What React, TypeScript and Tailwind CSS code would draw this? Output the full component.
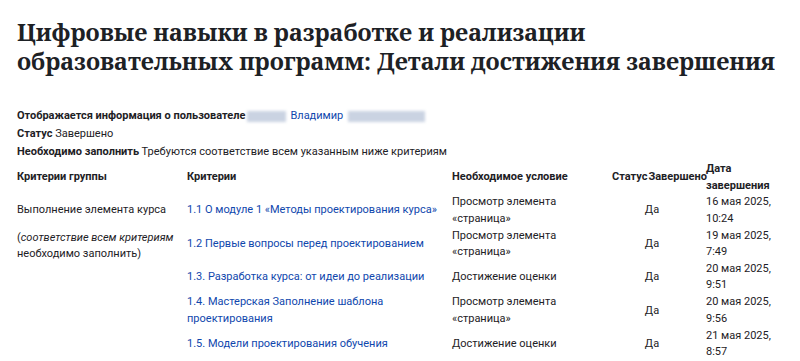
import React from "react";

const rows = [
  { c: "1.1 О модуле 1 «Методы проектирования курса»", cond: ["Просмотр элемента", "«страница»"], d: ["16 мая 2025,", "10:24"] },
  { c: "1.2 Первые вопросы перед проектированием", cond: ["Просмотр элемента", "«страница»"], d: ["19 мая 2025,", "7:49"] },
  { c: "1.3. Разработка курса: от идеи до реализации", cond: ["Достижение оценки"], d: ["20 мая 2025,", "9:51"] },
  { c: "1.4. Мастерская Заполнение шаблона проектирования", cond: ["Просмотр элемента", "«страница»"], d: ["20 мая 2025,", "9:56"] },
  { c: "1.5. Модели проектирования обучения", cond: ["Достижение оценки"], d: ["21 мая 2025,", "8:57"] },
];

function Blur({ w }: { w: number }) {
  return (
    <span className="inline-block align-middle h-[11px] bg-[#cad3e2] blur-[1.5px]" style={{ width: w }} />
  );
}

export default function App() {
  return (
    <div className="w-[800px] h-[361px] overflow-hidden bg-white text-[#1d2125] pl-[17px]" style={{ fontFamily: 'Roboto, sans-serif' }}>
      <h1
        className="pt-[18px] text-[23.3px] leading-[29px] font-bold text-[#1d2125] whitespace-nowrap"
        style={{ fontFamily: '"Noto Serif", serif' }}
      >
        Цифровые навыки в разработке и реализации
        <br />
        образовательных программ: Детали достижения завершения
      </h1>
      <div className="mt-[31px] text-[11px] leading-[18px]">
        <div className="flex items-center h-[18px]">
          <span className="font-bold">Отображается информация о пользователе</span>
          <span className="ml-[2px] flex"><Blur w={39} /></span>
          <span className="ml-[4px] text-[#0f47ad]">Владимир</span>
          <span className="ml-[5px] flex"><Blur w={77} /></span>
        </div>
        <div><span className="font-bold">Статус</span> Завершено</div>
        <div><span className="font-bold">Необходимо заполнить</span> Требуются соответствие всем указанным ниже критериям</div>
      </div>
      <div className="text-[11px] leading-[16.5px]">
        <div className="flex font-bold h-[33px] items-center">
          <div className="w-[170px]">Критерии группы</div>
          <div className="w-[265px]">Критерии</div>
          <div className="w-[160px]">Необходимое условие</div>
          <div className="w-[94px] flex gap-[1px] whitespace-nowrap"><span>Статус</span><span>Завершено</span></div>
          <div className="w-[80px]">Дата<br />завершения</div>
        </div>
        <div className="flex">
          <div className="w-[170px] pt-[8px]">
            <div>Выполнение элемента курса</div>
            <div className="mt-[11px]">(<i>соответствие всем критериям</i><br />необходимо заполнить)</div>
          </div>
          <div className="flex flex-col">
            {rows.map((r, i) => (
              <div key={i} className="flex h-[33.4px] items-center">
                <div className="w-[265px] text-[#0f47ad] pr-[4px]">{r.c}</div>
                <div className="w-[160px]">
                  {r.cond.map((t, j) => (
                    <div key={j}>{t}</div>
                  ))}
                </div>
                <div className="w-[94px] text-center pr-[14px]">Да</div>
                <div className="w-[80px]">
                  {r.d.map((t, j) => (
                    <div key={j}>{t}</div>
                  ))}
                </div>
              </div>
            ))}
          </div>
        </div>
      </div>
    </div>
  );
}
